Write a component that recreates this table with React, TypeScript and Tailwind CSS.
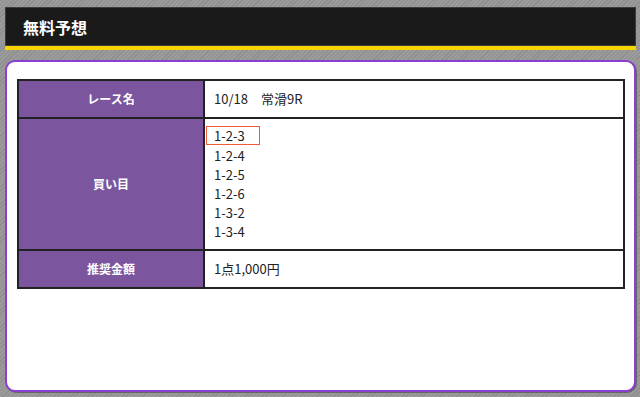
const picks = ['1-2-3', '1-2-4', '1-2-5', '1-2-6', '1-3-2', '1-3-4'];

const Label = ({ children }: { children: React.ReactNode }) => (
  <div className="flex items-center justify-center border-r-2 border-[#222] bg-[#7b569f] text-[12px] font-bold text-white">
    {children}
  </div>
);

export default function App() {
  return (
    <div
      className="h-[397px] w-[640px] overflow-hidden bg-[repeating-linear-gradient(135deg,#8e8e8e_0px,#8e8e8e_1px,#9b9b9b_1px,#9b9b9b_3px)] px-[5px] pt-[7px] pr-[4px]"
      style={{ fontFamily: '"Noto Sans CJK JP", "Noto Sans", sans-serif' }}
    >
      {/* page title */}
      <div className="flex h-[39px] items-center border border-[#3c3c3c] bg-[#1a1a1a] pl-[17px] text-[16px] font-bold text-white">
        無料予想
      </div>
      <div className="h-[4px] bg-[#f7d400]" />

      {/* card */}
      <div className="mt-[10px] h-[332px] rounded-[10px] border-2 border-[#8a3fd2] bg-white pl-[10px] pr-[9px] pt-[17px] shadow-[1px_1px_0_#666]">
        <div className="border-2 border-[#222] text-[13px] text-[#222]">
          <div className="grid h-[38px] grid-cols-[186px_1fr] border-b-2 border-[#222]">
            <Label>レース名</Label>
            <div className="flex items-center pl-[9px]">10/18　常滑9R</div>
          </div>

          <div className="grid h-[132px] grid-cols-[186px_1fr] border-b-2 border-[#222]">
            <Label>買い目</Label>
            <div className="flex flex-col pt-[7px] pl-[1px]">
              {picks.map((p, i) =>
                i === 0 ? (
                  <div
                    key={p}
                    className="mb-[1px] h-[19px] w-[54px] border border-solid border-[#ef5a3a] pl-[7px] leading-[17px]"
                  >
                    {p}
                  </div>
                ) : (
                  <div key={p} className="pl-[8px] leading-[19px]">
                    {p}
                  </div>
                ),
              )}
            </div>
          </div>

          <div className="grid h-[36px] grid-cols-[186px_1fr]">
            <Label>推奨金額</Label>
            <div className="flex items-center pl-[9px]">1点1,000円</div>
          </div>
        </div>
      </div>
    </div>
  );
}
